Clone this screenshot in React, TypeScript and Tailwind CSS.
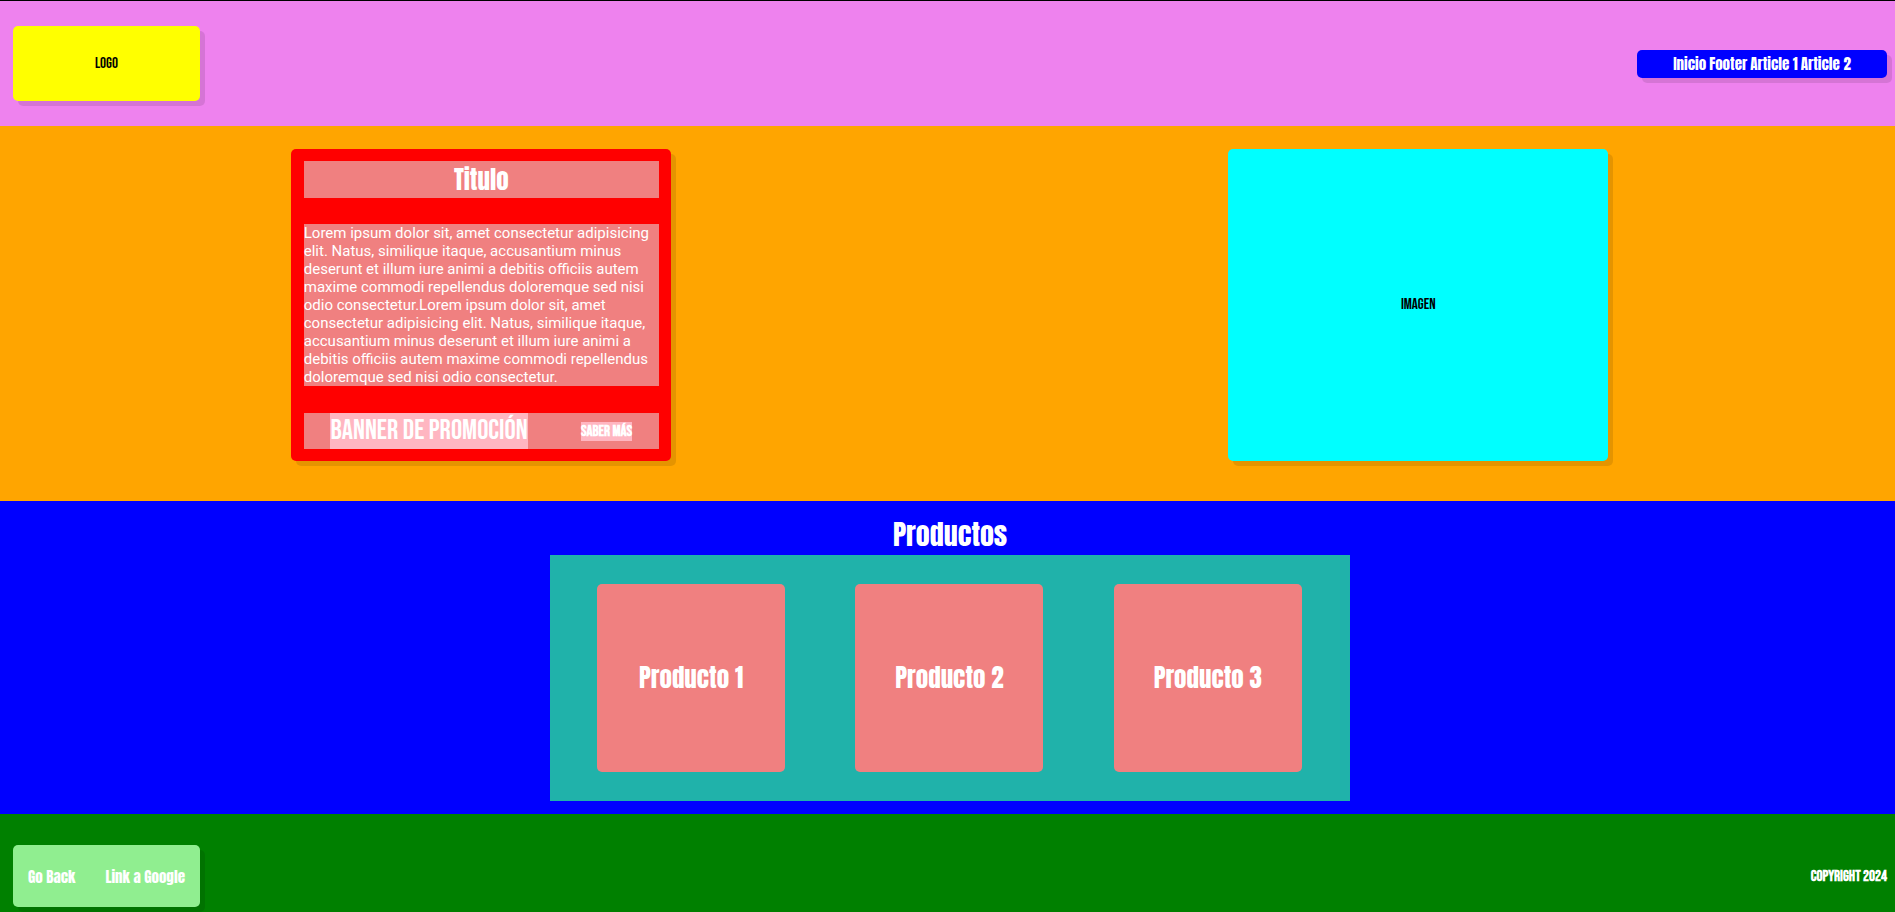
import React from "react";

const products = ["Producto 1", "Producto 2", "Producto 3"];

const navLinks = [
  { label: "Inicio", href: "#inicio" },
  { label: "Footer", href: "#footer" },
  { label: "Article 1", href: "#article-1" },
  { label: "Article 2", href: "#article-2" },
];

export default function App() {
  return (
    <div
      id="inicio"
      className="flex min-h-screen flex-col border-t border-black bg-[green] font-['Anton','Liberation_Sans_Narrow',sans-serif] text-[15px] leading-6 text-white"
    >
      <header className="flex h-[125px] items-center justify-between bg-[violet] pr-2 pl-[13px]">
        <div className="flex h-[75px] w-[187px] items-center justify-center rounded-[5px] bg-[yellow] font-['Bebas_Neue','Liberation_Sans_Narrow',sans-serif] text-black shadow-[5px_5px_0_rgba(0,0,0,0.1)]">
          LOGO
        </div>
        <nav className="flex h-7 w-[250px] items-center justify-center gap-[3px] rounded-[5px] bg-[blue] shadow-[5px_5px_0_rgba(0,0,0,0.1)]">
          {navLinks.map((link) => (
            <a key={link.href} href={link.href}>
              {link.label}
            </a>
          ))}
        </nav>
      </header>

      <main>
        <section className="flex items-start justify-around bg-[orange] pt-[23px] pr-2 pb-10 pl-3">
          <article
            id="article-1"
            className="w-[380px] rounded-[5px] bg-[red] py-3 pr-3 pl-[13px] shadow-[5px_5px_0_rgba(0,0,0,0.1)]"
          >
            <h1 className="bg-[lightcoral] text-center text-[25px] leading-[37px]">Titulo</h1>
            <p className="mt-[26px] mb-[27px] bg-[lightcoral] font-['Roboto',sans-serif] leading-[18px]">
              Lorem ipsum dolor sit, amet consectetur adipisicing elit. Natus, similique itaque, accusantium minus
              deserunt et illum iure animi a debitis officiis autem maxime commodi repellendus doloremque sed nisi odio
              consectetur.Lorem ipsum dolor sit, amet consectetur adipisicing elit. Natus, similique itaque, accusantium
              minus deserunt et illum iure animi a debitis officiis autem maxime commodi repellendus doloremque sed nisi
              odio consectetur.
            </p>
            <div className="flex items-center justify-around bg-[lightcoral] font-['Bebas_Neue','Liberation_Sans_Narrow',sans-serif]">
              <h2 className="bg-[lightpink] text-[28px] leading-9">BANNER DE PROMOCIÓN</h2>
              <button type="button" className="bg-[lightpink] leading-[19px] font-bold">
                SABER MÁS
              </button>
            </div>
          </article>
          <div className="flex h-[312px] w-[380px] items-center justify-center rounded-[5px] bg-[cyan] font-['Bebas_Neue','Liberation_Sans_Narrow',sans-serif] text-black shadow-[5px_5px_0_rgba(0,0,0,0.1)]">
            IMAGEN
          </div>
        </section>

        <section id="article-2" className="flex flex-col items-center bg-[blue] pt-3 pr-2 pb-[13px] pl-[13px]">
          <h2 className="text-[28px] leading-[42px]">Productos</h2>
          <div className="flex h-[246px] w-full max-w-[800px] items-center justify-around bg-[lightseagreen] pr-[13px] pl-3">
            {products.map((product) => (
              <div
                key={product}
                className="flex size-[188px] items-center justify-center rounded-[5px] bg-[lightcoral] text-[25px]"
              >
                {product}
              </div>
            ))}
          </div>
        </section>
      </main>

      <footer id="footer" className="flex items-center justify-between bg-[green] pt-[31px] pr-2 pb-[5px] pl-[13px]">
        <div className="flex h-[62px] w-[187px] items-center justify-around rounded-[5px] bg-[lightgreen] pt-0.5 shadow-[5px_5px_0_rgba(0,0,0,0.1)]">
          <a href="#inicio">Go Back</a>
          <a href="https://www.google.com">Link a Google</a>
        </div>
        <p className="pt-0.5 font-['Bebas_Neue','Liberation_Sans_Narrow',sans-serif] font-bold">COPYRIGHT 2024</p>
      </footer>
    </div>
  );
}
